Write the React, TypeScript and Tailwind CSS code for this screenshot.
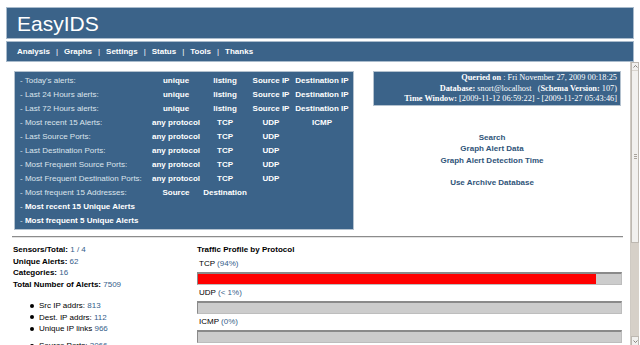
import React from "react";

const ALERT_ROWS: { label: string; cells: string[] }[] = [
  { label: "- Today's alerts:", cells: ["unique", "listing", "Source IP", "Destination IP"] },
  { label: "- Last 24 Hours alerts:", cells: ["unique", "listing", "Source IP", "Destination IP"] },
  { label: "- Last 72 Hours alerts:", cells: ["unique", "listing", "Source IP", "Destination IP"] },
  { label: "- Most recent 15 Alerts:", cells: ["any protocol", "TCP", "UDP", "ICMP"] },
  { label: "- Last Source Ports:", cells: ["any protocol", "TCP", "UDP"] },
  { label: "- Last Destination Ports:", cells: ["any protocol", "TCP", "UDP"] },
  { label: "- Most Frequent Source Ports:", cells: ["any protocol", "TCP", "UDP"] },
  { label: "- Most Frequent Destination Ports:", cells: ["any protocol", "TCP", "UDP"] },
  { label: "- Most frequent 15 Addresses:", cells: ["Source", "Destination"] },
];

const NAV = ["Analysis", "Graphs", "Settings", "Status", "Tools", "Thanks"];

const STATS = [
  ["Sensors/Total:", "1 / 4"],
  ["Unique Alerts:", "62"],
  ["Categories:", "16"],
  ["Total Number of Alerts:", "7509"],
];

const IP_STATS = [
  ["Src IP addrs:", "813"],
  ["Dest. IP addrs:", "112"],
  ["Unique IP links", "966"],
];

const PROTOCOLS = [
  { name: "TCP", pct: "94%", fill: 94 },
  { name: "UDP", pct: "< 1%", fill: 0 },
  { name: "ICMP", pct: "0%", fill: 0 },
];

function Scrollbar() {
  return (
    <div className="flex w-[9px] flex-col border-l border-[#cfcac3] bg-[#d6d0c8]">
      <div className="flex h-[181px] flex-col border border-[#bdb8b1] bg-[#f1f0ee]">
        <div className="flex h-[8px] items-center justify-center border-b border-[#d8d4ce]">
          <svg width="5" height="3" viewBox="0 0 5 3">
            <path d="M0.5 2.5 L2.5 0.5 L4.5 2.5" stroke="#6e6a65" fill="none" strokeWidth="0.8" />
          </svg>
        </div>
        <div className="flex flex-1 flex-col items-center justify-center gap-[1px]">
          <div className="h-px w-[3px] bg-[#a8a39c]" />
          <div className="h-px w-[3px] bg-[#a8a39c]" />
          <div className="h-px w-[3px] bg-[#a8a39c]" />
        </div>
      </div>
      <div className="flex-1" />
      <div className="flex h-[10px] items-center justify-center border border-[#bdb8b1] bg-[#f1f0ee]">
        <svg width="5" height="3" viewBox="0 0 5 3">
          <path d="M0.5 0.5 L2.5 2.5 L4.5 0.5" stroke="#6e6a65" fill="none" strokeWidth="0.8" />
        </svg>
      </div>
    </div>
  );
}

export default function App() {
  return (
    <div className="h-[345px] w-[640px] overflow-hidden bg-white font-['Liberation_Sans',Arial,sans-serif]">
      {/* header */}
      <div className="pl-[6px] pr-[6px] pt-[7px]">
        <div className="flex h-[32px] items-center border border-[#a9bbcc] bg-[#3b6389] pl-[10px] text-[21px] leading-none text-white">
          EasyIDS
        </div>
        <div className="mt-[2px] flex h-[21px] items-center border border-[#a9bbcc] bg-[#3b6389] pl-[10px] text-[8px] font-bold text-white">
          {NAV.map((n, i) => (
            <span key={n} className="flex items-center">
              {i > 0 && <span className="px-[6px] font-normal">|</span>}
              {n}
            </span>
          ))}
        </div>
      </div>

      <div className="flex h-[284px]">
        <div className="w-[630px]">
          <div className="flex pl-[14px] pt-[9px]">
            {/* alert links */}
            <div className="w-[340px] border border-[#b4c2cf] bg-[#3b6389] pb-[1px] pl-[5px] pt-[2px] text-[8px]">
              {ALERT_ROWS.map((r) => (
                <div key={r.label} className="grid h-[14px] grid-cols-[130px_52px_46px_46px_56px] items-center">
                  <span className="text-[#dce4ec]">{r.label}</span>
                  {r.cells.map((c) => (
                    <span key={c} className="text-center font-bold text-white">
                      {c}
                    </span>
                  ))}
                </div>
              ))}
              <div className="flex h-[14px] items-center font-bold text-white">
                <span className="font-normal text-[#dce4ec]">-&nbsp;</span>Most recent 15 Unique Alerts
              </div>
              <div className="flex h-[14px] items-center font-bold text-white">
                <span className="font-normal text-[#dce4ec]">-&nbsp;</span>Most frequent 5 Unique Alerts
              </div>
            </div>

            {/* query info + links */}
            <div className="flex flex-1 flex-col">
              <div className="ml-[19px] w-[248px] border border-[#b4c2cf] bg-[#3b6389] pr-[3px] pt-[1px] text-right font-['Liberation_Serif',serif] text-[8.3px] leading-[10.5px] text-white">
                <div>
                  <b>Queried on</b> : Fri November 27, 2009 00:18:25
                </div>
                <div>
                  <b>Database:</b> snort@localhost&nbsp;&nbsp;&nbsp;(<b>Schema Version:</b> 107)
                </div>
                <div>
                  <b>Time Window:</b> [2009-11-12 06:59:22] - [2009-11-27 05:43:46]
                </div>
              </div>
              <div className="mt-[26px] flex flex-col items-center text-[8px] font-bold leading-[11.5px] text-[#2f5479]">
                <span>Search</span>
                <span>Graph Alert Data</span>
                <span>Graph Alert Detection Time</span>
                <span className="mt-[11px]">Use Archive Database</span>
              </div>
            </div>
          </div>

          <div className="ml-[12px] mt-[6px] h-[2px] w-[611px] border-t border-b border-t-[#8c8c8c] border-b-[#e2e2e2]" />

          <div className="flex pt-[6px]">
            {/* totals */}
            <div className="w-[197px] pl-[13px] text-[8px] leading-[11.7px]">
              {STATS.map(([k, v]) => (
                <div key={k}>
                  <span className="font-bold text-black">{k}</span> <span className="text-[#35608a]">{v}</span>
                </div>
              ))}
              <ul className="mt-[9px]">
                {IP_STATS.map(([k, v]) => (
                  <li key={k} className="flex items-center">
                    <span className="ml-[17px] mr-[5px] h-[4px] w-[4px] rounded-full bg-black" />
                    <span className="text-black">{k}</span>&nbsp;<span className="text-[#35608a]">{v}</span>
                  </li>
                ))}
                <li className="mt-[5px] flex items-center">
                  <span className="ml-[17px] mr-[5px] h-[4px] w-[4px] rounded-full bg-black" />
                  <span className="text-black">Source Ports:</span>&nbsp;<span className="text-[#35608a]">3066</span>
                </li>
              </ul>
            </div>

            {/* traffic profile */}
            <div className="w-[425px] text-[8px]">
              <div className="font-bold leading-[12px] text-black">Traffic Profile by Protocol</div>
              {PROTOCOLS.map((p) => (
                <div key={p.name}>
                  <div className="pl-[2px] leading-[16px] text-black">
                    {p.name} <span className="text-[#35608a]">({p.pct})</span>
                  </div>
                  <div className="flex h-[13px] border border-t-2 border-[#8a8a8a] border-b-[#bdbdbd] border-r-[#bdbdbd] bg-[#cccccc]">
                    {p.fill > 0 && <div className="h-full bg-[#ff0000]" style={{ width: `${p.fill}%` }} />}
                  </div>
                </div>
              ))}
              <div className="ml-[65px] mt-[4px] w-[296px] border-t border-[#8a8a8a]" />
            </div>
          </div>
        </div>
        <Scrollbar />
      </div>
    </div>
  );
}
